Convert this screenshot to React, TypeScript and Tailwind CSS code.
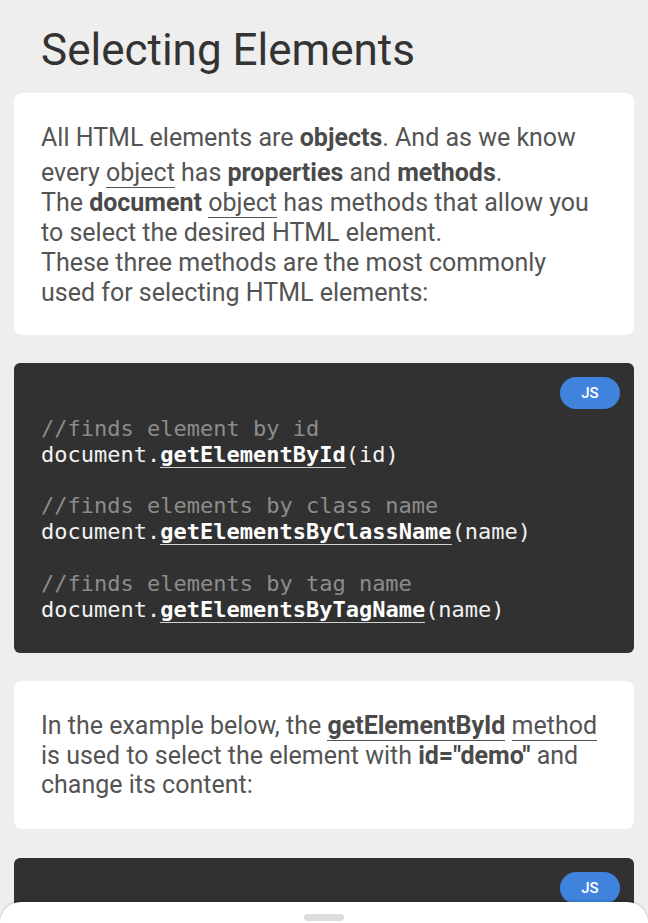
import React from 'react';

const mono = { fontFamily: '"DejaVu Sans Mono", "Liberation Mono", monospace' };

function Badge() {
    return (
        <div className="flex justify-end">
            <span className="flex h-[32px] w-[60px] items-center justify-center rounded-full bg-[#3f83dd] text-[15px] font-medium text-white">
                JS
            </span>
        </div>
    );
}

function Method({ children }: { children: React.ReactNode }) {
    return <span className="font-bold text-white border-b border-[#cfcfcf]">{children}</span>;
}

function Line({ children, className = '' }: { children: React.ReactNode; className?: string }) {
    return <div className={`whitespace-nowrap ${className}`}>{children}</div>;
}

function U({ children }: { children: React.ReactNode }) {
    return <span className="border-b border-[#555]">{children}</span>;
}

export default function App() {
    return (
        <div
            className="min-h-screen bg-[#eeeeee] px-[14px] pb-10"
            style={{ fontFamily: 'Roboto, "Noto Sans", sans-serif' }}
        >
            <h1 className="pl-[27px] pt-[24px] pb-[17px] text-[44px] leading-[52px] text-[#333333]">
                Selecting Elements
            </h1>

            <div className="rounded-[8px] bg-white pl-[27px] pt-[30px] pb-[27px] text-[25px] leading-[30px] text-[#545454]">
                <Line>All HTML elements are <b className="text-[#4a4a4a]">objects</b>. And as we know</Line>
                <Line className="mt-[5px]">every <U>object</U> has <b className="text-[#4a4a4a]">properties</b> and <b className="text-[#4a4a4a]">methods</b>.</Line>
                <Line>The <b className="text-[#4a4a4a]">document</b> <U>object</U> has methods that allow you</Line>
                <Line>to select the desired HTML element.</Line>
                <Line>These three methods are the most commonly</Line>
                <Line>used for selecting HTML elements:</Line>
            </div>

            <div className="mt-[28px] rounded-[6px] bg-[#313131] pt-[14px] pr-[14px] pb-[31px]">
                <Badge />
                <div className="mt-[7px] pl-[27px] text-[22px] leading-[25.8px] text-[#f2f2f2]" style={mono}>
                    <Line className="text-[#8c8c8c]">//finds element by id</Line>
                    <Line>document.<Method>getElementById</Method>(id)</Line>
                    <Line>&nbsp;</Line>
                    <Line className="text-[#8c8c8c]">//finds elements by class name</Line>
                    <Line>document.<Method>getElementsByClassName</Method>(name)</Line>
                    <Line>&nbsp;</Line>
                    <Line className="text-[#8c8c8c]">//finds elements by tag name</Line>
                    <Line>document.<Method>getElementsByTagName</Method>(name)</Line>
                </div>
            </div>

            <div className="mt-[28px] rounded-[8px] bg-white pl-[27px] pt-[30px] pb-[29px] text-[25px] leading-[29.5px] text-[#545454]">
                <Line>In the example below, the <b className="text-[#4a4a4a]"><U>getElementById</U></b> <U>method</U></Line>
                <Line>is used to select the element with <b className="text-[#4a4a4a]">id="demo"</b> and</Line>
                <Line>change its content:</Line>
            </div>

            <div className="mt-[29px] h-[200px] rounded-[6px] bg-[#313131] pt-[14px] pr-[14px]">
                <Badge />
            </div>

            <div className="fixed bottom-0 left-0 right-0 h-[21px] rounded-t-[22px] bg-white shadow-[0_-1px_3px_rgba(0,0,0,0.15)]">
                <div className="mx-auto mt-[12px] h-[7px] w-[40px] rounded-full bg-[#dcdcdc]" />
            </div>
        </div>
    );
}
